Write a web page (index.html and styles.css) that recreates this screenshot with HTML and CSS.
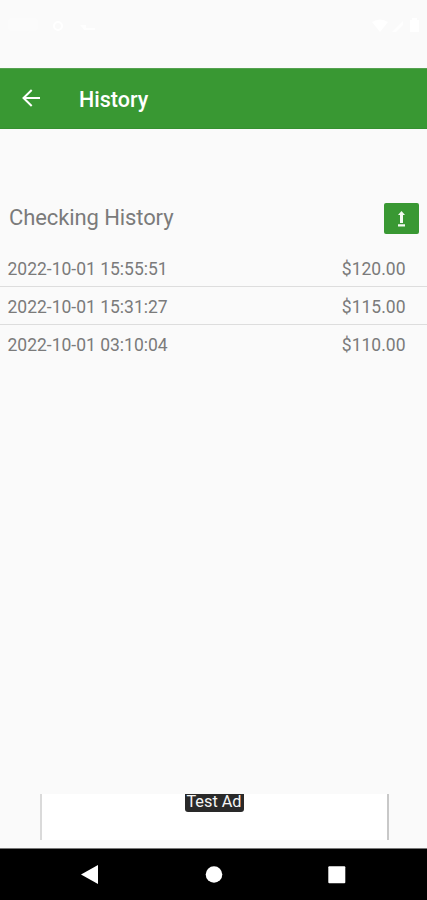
FILE: index.html
```html
<!DOCTYPE html>
<html lang="en">
<head>
<meta charset="utf-8">
<title>History</title>
<link rel="stylesheet" href="styles.css">
</head>
<body>
<div class="status">
  <svg width="427" height="68" viewBox="0 0 427 68" fill="#fff">
    <rect x="8" y="18" width="30" height="13" rx="3" opacity=".25"/>
    <circle cx="58" cy="26" r="4" fill="none" stroke="#fff" stroke-width="2"/>
    <path d="M80 25h6v3h9v2H84z" opacity=".7"/>
    <path d="M372 22q8-5 16 0l-8 10z"/>
    <path d="M392 32l11-11v4l-7 7z" opacity=".8"/>
    <path d="M410 20h2v-2h5v2h2v12h-9z"/>
  </svg>
</div>
<header class="appbar">
  <svg class="back" width="20" height="20" viewBox="0 0 20 20" fill="none" stroke="#fff" stroke-width="2"><path d="M19 10H2.5M10.7 2L2.5 10l8.2 8"/></svg>
  <h1 class="title">History</h1>
</header>
<main class="content">
  <div class="heading">
    <h2 class="subtitle">Checking History</h2>
    <button class="export" aria-label="Export">
      <svg width="11" height="18" viewBox="0 0 11 18" fill="#f4faf3"><path d="M5.5 1L9 5H7v8H4V5H2zM2 14.2h7v2.3H2z"/></svg>
    </button>
  </div>
  <ul class="list">
    <li class="row"><span>2022-10-01 15:55:51</span><span>$120.00</span></li>
    <li class="row"><span>2022-10-01 15:31:27</span><span>$115.00</span></li>
    <li class="row"><span>2022-10-01 03:10:04</span><span>$110.00</span></li>
  </ul>
</main>
<div class="ad"><span class="ad-label">Test Ad</span></div>
<nav class="nav">
  <svg width="427" height="51" viewBox="0 0 427 51" fill="#fff">
    <path d="M81 25.5L98 16v19z"/>
    <circle cx="214" cy="25.5" r="8.3"/>
    <rect x="328.3" y="17.3" width="17" height="17" rx="1"/>
  </svg>
</nav>
</body>
</html>
```
FILE: styles.css
```css
* { box-sizing: border-box; }
body {
  margin: 0;
  width: 427px;
  height: 900px;
  overflow: hidden;
  display: flex;
  flex-direction: column;
  background: #fafafa;
  color: #7b7b7b;
  font-family: Roboto, sans-serif;
}
svg { display: block; }
.status { height: 68px; }
.appbar {
  height: 61px;
  display: flex;
  align-items: center;
  padding: 0 21px;
  background: #399833;
  border-top: 1px solid #55a150;
  border-bottom: 1px solid #359030;
}
.back { margin-top: -1px; }
.title {
  margin: 2px 0 0 38px;
  color: #fff;
  font-size: 21.5px;
  font-weight: 500;
  line-height: 28px;
}
.content { flex: 1; padding-top: 74px; }
.heading {
  height: 31px;
  display: flex;
  align-items: center;
  justify-content: space-between;
  padding: 0 8px 0 9px;
}
.subtitle {
  margin: -2px 0 0;
  font-size: 22px;
  font-weight: 400;
  line-height: 28px;
  letter-spacing: -0.1px;
}
.export {
  width: 35px;
  height: 31px;
  padding: 0;
  border: 0;
  border-radius: 2px;
  display: flex;
  align-items: center;
  justify-content: center;
  background: #399833;
}
.list {
  margin: 15px 0 0;
  padding: 0;
  list-style: none;
}
.row {
  height: 38px;
  display: flex;
  align-items: center;
  justify-content: space-between;
  padding: 2px 21.5px 0 7.5px;
  font-size: 17.5px;
  border-bottom: 1px solid #dddddd;
}
.row:last-child {
  padding-top: 1px;
  border-bottom: 0;
}
.ad {
  width: 349px;
  height: 46px;
  margin: 0 0 8px 40px;
  display: flex;
  justify-content: center;
  align-items: flex-start;
  background: #fff;
  border-left: 2px solid #dadada;
  border-right: 2px solid #c8c8c8;
}
.ad-label {
  width: 59px;
  height: 18px;
  margin-right: 1px;
  border-radius: 0 0 3px 3px;
  background: #292929;
  color: #f5f5f5;
  font-size: 16.3px;
  line-height: 16px;
  text-align: center;
  white-space: nowrap;
}
.nav {
  height: 52px;
  background: #000;
  border-top: 1px solid #777;
}
```
